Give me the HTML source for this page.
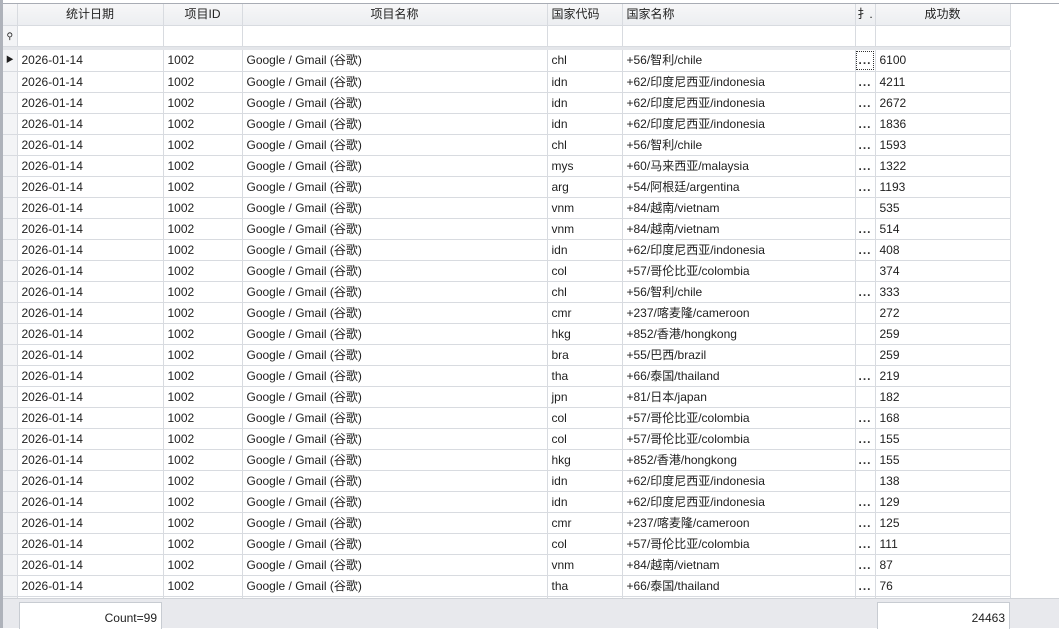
<!DOCTYPE html>
<html><head><meta charset="utf-8"><style>
*{margin:0;padding:0;box-sizing:border-box}
body{width:1059px;height:628px;overflow:hidden;background:#fff;font-family:"Liberation Sans","Noto Sans CJK SC",sans-serif;font-size:12px;color:#1e1e1e;position:relative}
.lb{position:absolute;left:0;top:0;width:3px;height:628px;background:#aeb2ba}
.top{position:absolute;left:0;top:0;width:1059px;height:4px;background:#fff;border-bottom:1px solid #a8acb4}
table{position:absolute;left:3px;top:4px;border-collapse:collapse;table-layout:fixed}
td{border-right:1px solid #d8dbe0;border-bottom:1px solid #d8dbe0;height:21px;padding:0 0 0 4px;white-space:nowrap;overflow:hidden;line-height:20px}
tr.h td{background:linear-gradient(#f7f7f8,#eceef1);text-align:center;padding:0;color:#222;height:21px}
tr.f td{height:21px}
tr.s td{height:4px;background:#e4e6ea;border:none;padding:0}
td.i{padding:0;background:#f3f4f6}
td.e{padding:0 0 0 3px;letter-spacing:1px;font-weight:bold;color:#333}
td.n{border-right:none;border-bottom:none;background:#fff}
.foot{position:absolute;left:3px;top:598px;width:1056px;height:30px;background:#e8e9ed;border-top:1px solid #d0d3d8}
.box{position:absolute;top:3px;height:27px;background:#fff;border:1px solid #c8ccd2;border-bottom:none;text-align:right;padding:8px 4px 0 0}
</style></head><body>
<div class="top"></div>
<table>
<colgroup><col style="width:14px"><col style="width:146px"><col style="width:79px"><col style="width:305px"><col style="width:75px"><col style="width:233px"><col style="width:20px"><col style="width:135px"><col style="width:49px"></colgroup>
<tr class="h"><td></td><td>统计日期</td><td>项目ID</td><td>项目名称</td><td style="text-align:left;padding-left:4px">国家代码</td><td style="text-align:left;padding-left:4px">国家名称</td><td>扌.</td><td>成功数</td><td class="n" style="background:#fff"></td></tr>
<tr class="f"><td class="i" style="font-size:9px;text-align:center">&#9906;</td><td></td><td></td><td></td><td></td><td></td><td></td><td></td><td class="n"></td></tr>
<tr class="s"><td></td><td></td><td></td><td></td><td></td><td></td><td></td><td></td><td style="background:#fff"></td></tr>
<tr><td class="i" style="font-size:8px;text-align:center">&#9654;</td><td>2026-01-14</td><td>1002</td><td>Google / Gmail (谷歌)</td><td>chl</td><td>+56/智利/chile</td><td class="e" style="outline:1px dotted #333;outline-offset:-2px">...</td><td>6100</td><td class="n"></td></tr>
<tr><td class="i"></td><td>2026-01-14</td><td>1002</td><td>Google / Gmail (谷歌)</td><td>idn</td><td>+62/印度尼西亚/indonesia</td><td class="e">...</td><td>4211</td><td class="n"></td></tr>
<tr><td class="i"></td><td>2026-01-14</td><td>1002</td><td>Google / Gmail (谷歌)</td><td>idn</td><td>+62/印度尼西亚/indonesia</td><td class="e">...</td><td>2672</td><td class="n"></td></tr>
<tr><td class="i"></td><td>2026-01-14</td><td>1002</td><td>Google / Gmail (谷歌)</td><td>idn</td><td>+62/印度尼西亚/indonesia</td><td class="e">...</td><td>1836</td><td class="n"></td></tr>
<tr><td class="i"></td><td>2026-01-14</td><td>1002</td><td>Google / Gmail (谷歌)</td><td>chl</td><td>+56/智利/chile</td><td class="e">...</td><td>1593</td><td class="n"></td></tr>
<tr><td class="i"></td><td>2026-01-14</td><td>1002</td><td>Google / Gmail (谷歌)</td><td>mys</td><td>+60/马来西亚/malaysia</td><td class="e">...</td><td>1322</td><td class="n"></td></tr>
<tr><td class="i"></td><td>2026-01-14</td><td>1002</td><td>Google / Gmail (谷歌)</td><td>arg</td><td>+54/阿根廷/argentina</td><td class="e">...</td><td>1193</td><td class="n"></td></tr>
<tr><td class="i"></td><td>2026-01-14</td><td>1002</td><td>Google / Gmail (谷歌)</td><td>vnm</td><td>+84/越南/vietnam</td><td class="e"></td><td>535</td><td class="n"></td></tr>
<tr><td class="i"></td><td>2026-01-14</td><td>1002</td><td>Google / Gmail (谷歌)</td><td>vnm</td><td>+84/越南/vietnam</td><td class="e">...</td><td>514</td><td class="n"></td></tr>
<tr><td class="i"></td><td>2026-01-14</td><td>1002</td><td>Google / Gmail (谷歌)</td><td>idn</td><td>+62/印度尼西亚/indonesia</td><td class="e">...</td><td>408</td><td class="n"></td></tr>
<tr><td class="i"></td><td>2026-01-14</td><td>1002</td><td>Google / Gmail (谷歌)</td><td>col</td><td>+57/哥伦比亚/colombia</td><td class="e"></td><td>374</td><td class="n"></td></tr>
<tr><td class="i"></td><td>2026-01-14</td><td>1002</td><td>Google / Gmail (谷歌)</td><td>chl</td><td>+56/智利/chile</td><td class="e">...</td><td>333</td><td class="n"></td></tr>
<tr><td class="i"></td><td>2026-01-14</td><td>1002</td><td>Google / Gmail (谷歌)</td><td>cmr</td><td>+237/喀麦隆/cameroon</td><td class="e"></td><td>272</td><td class="n"></td></tr>
<tr><td class="i"></td><td>2026-01-14</td><td>1002</td><td>Google / Gmail (谷歌)</td><td>hkg</td><td>+852/香港/hongkong</td><td class="e"></td><td>259</td><td class="n"></td></tr>
<tr><td class="i"></td><td>2026-01-14</td><td>1002</td><td>Google / Gmail (谷歌)</td><td>bra</td><td>+55/巴西/brazil</td><td class="e"></td><td>259</td><td class="n"></td></tr>
<tr><td class="i"></td><td>2026-01-14</td><td>1002</td><td>Google / Gmail (谷歌)</td><td>tha</td><td>+66/泰国/thailand</td><td class="e">...</td><td>219</td><td class="n"></td></tr>
<tr><td class="i"></td><td>2026-01-14</td><td>1002</td><td>Google / Gmail (谷歌)</td><td>jpn</td><td>+81/日本/japan</td><td class="e"></td><td>182</td><td class="n"></td></tr>
<tr><td class="i"></td><td>2026-01-14</td><td>1002</td><td>Google / Gmail (谷歌)</td><td>col</td><td>+57/哥伦比亚/colombia</td><td class="e">...</td><td>168</td><td class="n"></td></tr>
<tr><td class="i"></td><td>2026-01-14</td><td>1002</td><td>Google / Gmail (谷歌)</td><td>col</td><td>+57/哥伦比亚/colombia</td><td class="e">...</td><td>155</td><td class="n"></td></tr>
<tr><td class="i"></td><td>2026-01-14</td><td>1002</td><td>Google / Gmail (谷歌)</td><td>hkg</td><td>+852/香港/hongkong</td><td class="e">...</td><td>155</td><td class="n"></td></tr>
<tr><td class="i"></td><td>2026-01-14</td><td>1002</td><td>Google / Gmail (谷歌)</td><td>idn</td><td>+62/印度尼西亚/indonesia</td><td class="e"></td><td>138</td><td class="n"></td></tr>
<tr><td class="i"></td><td>2026-01-14</td><td>1002</td><td>Google / Gmail (谷歌)</td><td>idn</td><td>+62/印度尼西亚/indonesia</td><td class="e">...</td><td>129</td><td class="n"></td></tr>
<tr><td class="i"></td><td>2026-01-14</td><td>1002</td><td>Google / Gmail (谷歌)</td><td>cmr</td><td>+237/喀麦隆/cameroon</td><td class="e">...</td><td>125</td><td class="n"></td></tr>
<tr><td class="i"></td><td>2026-01-14</td><td>1002</td><td>Google / Gmail (谷歌)</td><td>col</td><td>+57/哥伦比亚/colombia</td><td class="e">...</td><td>111</td><td class="n"></td></tr>
<tr><td class="i"></td><td>2026-01-14</td><td>1002</td><td>Google / Gmail (谷歌)</td><td>vnm</td><td>+84/越南/vietnam</td><td class="e">...</td><td>87</td><td class="n"></td></tr>
<tr><td class="i"></td><td>2026-01-14</td><td>1002</td><td>Google / Gmail (谷歌)</td><td>tha</td><td>+66/泰国/thailand</td><td class="e">...</td><td>76</td><td class="n"></td></tr>
<tr><td class="i"></td><td></td><td></td><td></td><td></td><td></td><td></td><td></td><td class="n"></td></tr>
</table>
<div class="foot">
<div class="box" style="left:16px;width:143px">Count=99</div>
<div class="box" style="left:874px;width:133px">24463</div>
</div>
<div class="lb"></div>
</body></html>
